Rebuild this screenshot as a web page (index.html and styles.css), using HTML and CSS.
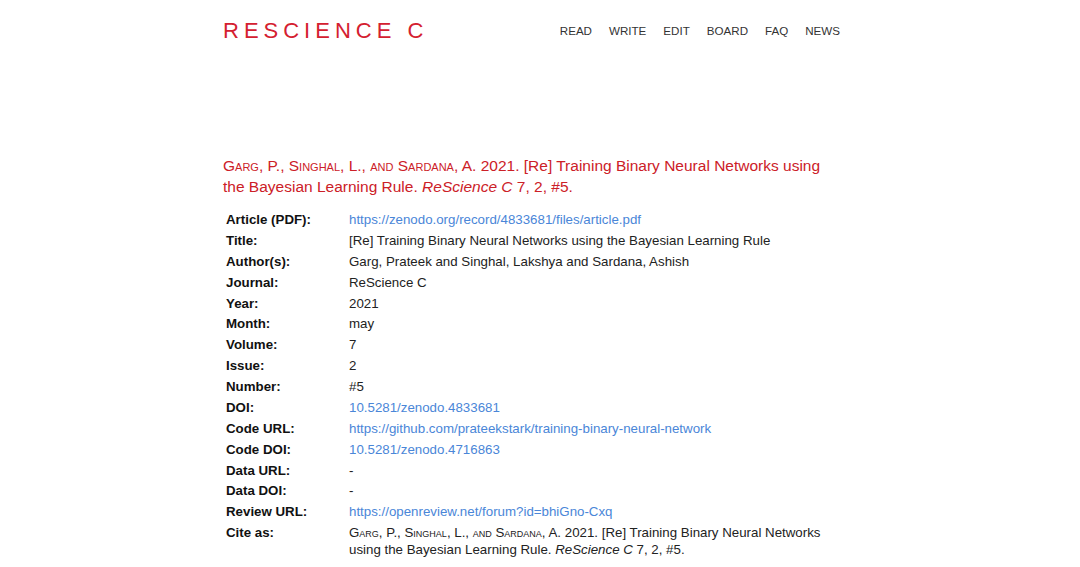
FILE: index.html
```html
<!DOCTYPE html>
<html>
<head>
<meta charset="utf-8">
<title>ReScience C</title>
<link rel="stylesheet" href="styles.css">
</head>
<body>
<div class="page">
  <header class="header">
    <div class="logo">RESCIENCE C</div>
    <nav class="nav">
      <a href="#">READ</a>
      <a href="#">WRITE</a>
      <a href="#">EDIT</a>
      <a href="#">BOARD</a>
      <a href="#">FAQ</a>
      <a href="#">NEWS</a>
    </nav>
  </header>

  <h1 class="citation">
    <span class="sc">Garg</span>, P., <span class="sc">Singhal</span>, L., <span class="sc">and Sardana</span>, A. 2021. [Re] Training Binary Neural Networks using the Bayesian Learning Rule. <i>ReScience C</i> 7, 2, #5.
  </h1>

  <table class="meta">
    <tr><th>Article (PDF):</th><td><a href="#">https://zenodo.org/record/4833681/files/article.pdf</a></td></tr>
    <tr><th>Title:</th><td>[Re] Training Binary Neural Networks using the Bayesian Learning Rule</td></tr>
    <tr><th>Author(s):</th><td>Garg, Prateek and Singhal, Lakshya and Sardana, Ashish</td></tr>
    <tr><th>Journal:</th><td>ReScience C</td></tr>
    <tr><th>Year:</th><td>2021</td></tr>
    <tr><th>Month:</th><td>may</td></tr>
    <tr><th>Volume:</th><td>7</td></tr>
    <tr><th>Issue:</th><td>2</td></tr>
    <tr><th>Number:</th><td>#5</td></tr>
    <tr><th>DOI:</th><td><a href="#">10.5281/zenodo.4833681</a></td></tr>
    <tr><th>Code URL:</th><td><a href="#">https://github.com/prateekstark/training-binary-neural-network</a></td></tr>
    <tr><th>Code DOI:</th><td><a href="#">10.5281/zenodo.4716863</a></td></tr>
    <tr><th>Data URL:</th><td>-</td></tr>
    <tr><th>Data DOI:</th><td>-</td></tr>
    <tr><th>Review URL:</th><td><a href="#">https://openreview.net/forum?id=bhiGno-Cxq</a></td></tr>
    <tr><th>Cite as:</th><td><span class="sc">Garg</span>, P., <span class="sc">Singhal</span>, L., <span class="sc">and Sardana</span>, A. 2021. [Re] Training Binary Neural Networks using the Bayesian Learning Rule. <i>ReScience C</i> 7, 2, #5.</td></tr>
  </table>
</div>
</body>
</html>
```

FILE: styles.css
```css
html, body {
  margin: 0;
  padding: 0;
  background: #ffffff;
}

body {
  font-family: "Liberation Sans", Arial, sans-serif;
  color: #222222;
}

.page {
  width: 617px;
  margin-left: 223px;
}

.header {
  display: flex;
  justify-content: space-between;
  align-items: center;
  padding-top: 17px;
  height: 28px;
}

.logo {
  font-size: 22px;
  letter-spacing: 5px;
  color: #d42030;
  line-height: 28px;
}

.nav {
  display: flex;
  gap: 17px;
  padding-bottom: 1px;
}

.nav a {
  font-size: 11.6px;
  color: #333333;
  text-decoration: none;
}

.citation {
  margin: 110px 0 0 0;
  font-size: 15.5px;
  font-weight: normal;
  line-height: 21px;
  color: #cc2027;
}

.sc {
  font-variant: small-caps;
}

.meta {
  margin-top: 13px;
  border-collapse: collapse;
  font-size: 13.3px;
  line-height: 16.87px;
}

.meta th {
  text-align: left;
  font-weight: bold;
  vertical-align: top;
  padding: 2px 0 2px 3px;
  width: 123px;
  color: #111111;
}

.meta td {
  vertical-align: top;
  padding: 2px 0;
  color: #222222;
}

.meta a {
  color: #4a86d8;
  text-decoration: none;
}
```
